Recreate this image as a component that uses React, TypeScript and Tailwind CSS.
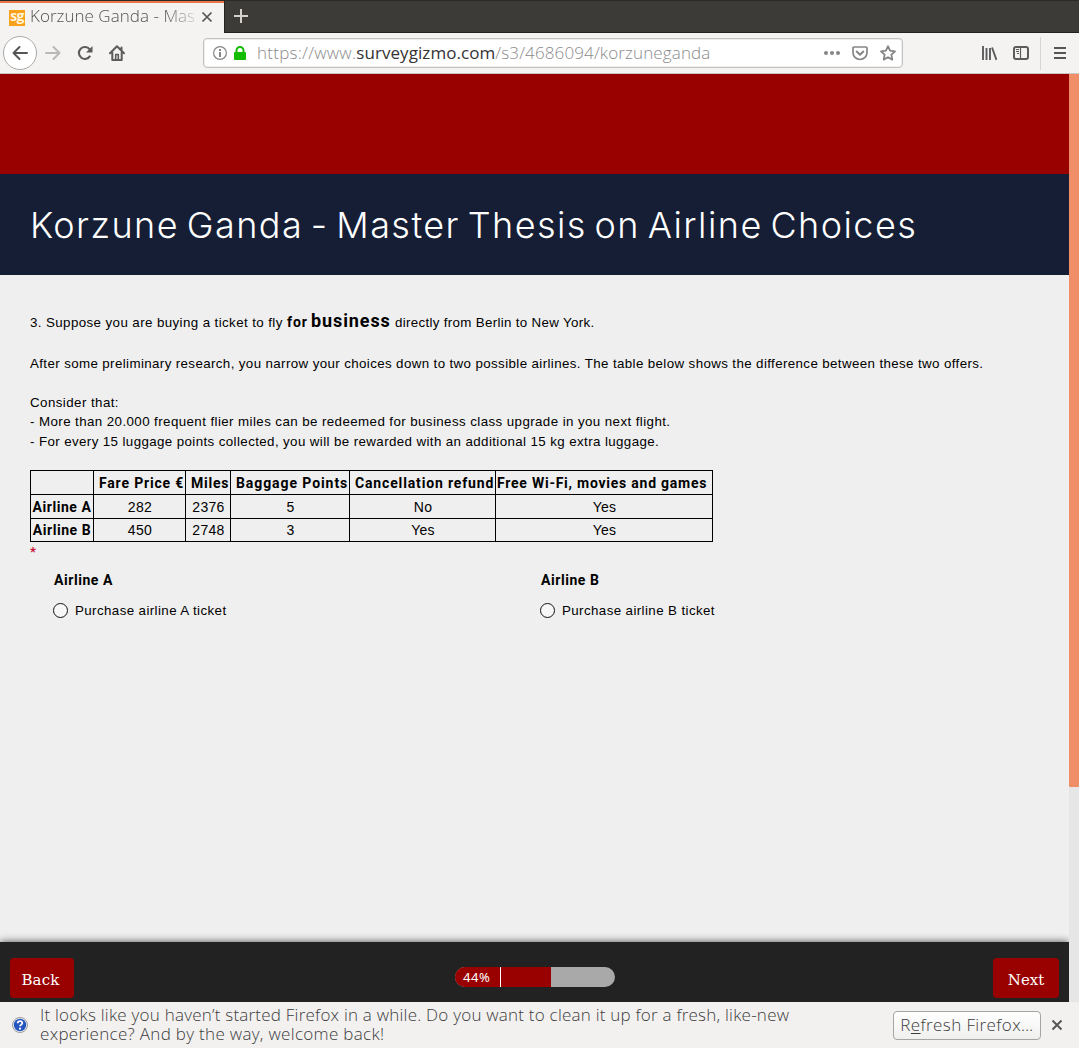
import type { ReactNode } from "react";

const columns = [
  { head: "", a: "Airline A", b: "Airline B", width: "w-[63px]", pad: "" },
  { head: "Fare Price €", a: "282", b: "450", width: "w-[92px]", pad: "pl-[5px] tracking-[0.830px]" },
  { head: "Miles", a: "2376", b: "2748", width: "w-[45px]", pad: "pl-[5px] tracking-[0.780px]" },
  { head: "Baggage Points", a: "5", b: "3", width: "w-[119px]", pad: "pl-[5px] tracking-[0.920px]" },
  { head: "Cancellation refund", a: "No", b: "Yes", width: "w-[146px]", pad: "pl-[5px] tracking-[0.850px]" },
  { head: "Free Wi-Fi, movies and games", a: "Yes", b: "Yes", width: "w-[217px]", pad: "pl-[1px] tracking-[0.760px]" },
];

function TabBar() {
  return (
    <div className="flex h-[33px] border-t border-[#2b2a27] bg-[#3c3b37]">
      <div className="flex h-8 w-[224px] items-center border-t-2 border-[#e9764b] bg-[#f4f3f2] pb-[2px] pl-[9px]">
        <div className="mt-px flex h-4 w-4 shrink-0 items-center justify-center bg-[#f9a11b] pb-[3px] font-['Open_Sans'] text-[14px] leading-4 font-bold tracking-[-0.8px] text-[#fff4dc]">
          sg
        </div>
        <div className="-mt-[2px] ml-[5px] w-[166px] overflow-hidden bg-gradient-to-r from-[#4c4c4c] from-80% to-[#d8d8d8] bg-clip-text text-[17px] leading-[26px] font-[350] tracking-[0.030px] whitespace-nowrap text-transparent">
          Korzune Ganda - Mas
        </div>
        <svg className="ml-[5px] h-3 w-3 shrink-0" viewBox="0 0 12 12" fill="none" stroke="#555" strokeWidth="1.7">
          <path d="M1.500 1.500l9 9M10.500 1.500l-9 9" />
        </svg>
      </div>
      <div className="flex flex-1 items-center border-b border-l border-[#23221f] pb-px pl-[9px]">
        <svg className="h-[14px] w-[14px]" viewBox="0 0 14 14" stroke="#d4d1cd" strokeWidth="2">
          <path d="M7 0v14M0 7h14" />
        </svg>
      </div>
    </div>
  );
}

function NavBar() {
  return (
    <div className="flex h-[41px] items-center border-b border-[#c9c7c5] bg-[#f4f3f2]">
      <div className="ml-[3px] flex h-[34px] w-[34px] shrink-0 items-center justify-center rounded-full border border-[#aaa] bg-white">
        <svg className="h-4 w-4" viewBox="0 0 16 16" fill="none" stroke="#555" strokeWidth="2" strokeLinecap="round" strokeLinejoin="round">
          <path d="M15 8H1.500M7.500 2L1.500 8l6 6" />
        </svg>
      </div>
      <svg className="ml-2 h-4 w-4 shrink-0" viewBox="0 0 16 16" fill="none" stroke="#b9b8b7" strokeWidth="2" strokeLinecap="round" strokeLinejoin="round">
        <path d="M1 8h13.500M8.500 2l6 6-6 6" />
      </svg>
      <svg className="ml-4 h-4 w-4 shrink-0" viewBox="0 0 16 16" fill="none" stroke="#5c5c5c" strokeWidth="2.100">
        <path d="M13.200 10.800A6 6 0 1 1 12.700 4.300" />
        <path d="M15.500 1v6.500H9z" fill="#5c5c5c" stroke="none" />
      </svg>
      <svg className="ml-4 h-4 w-4 shrink-0" viewBox="0 0 16 16" fill="none" stroke="#5c5c5c" strokeWidth="2" strokeLinejoin="round" strokeLinecap="round">
        <path d="M1 8.300L8 1.300l7 7M3.300 7.500V15h9.400V7.500M12.500 5V2.500" />
        <path d="M6.700 15V9.500h2.600V15" strokeWidth="1.600" />
      </svg>
      <div className="ml-[78px] flex h-[30px] w-[700px] shrink-0 items-center rounded-[4px] border border-[#c4c2c0] bg-white pr-[6px] pl-[9px] shadow-[inset_0_0_0_1px_#eeeeee]">
        <svg className="h-[14px] w-[14px] shrink-0" viewBox="0 0 14 14" fill="none" stroke="#858585">
          <circle cx="7" cy="7" r="6.400" strokeWidth="1.200" />
          <path d="M7 6v5M7 3v2" strokeWidth="2" />
        </svg>
        <svg className="ml-[7px] h-[14px] w-3 shrink-0" viewBox="0 0 12 14">
          <rect x="0" y="6" width="12" height="8" rx="1" fill="#12bc00" />
          <path d="M2.500 7V4.500a3.500 3.500 0 0 1 7 0V7" fill="none" stroke="#12bc00" strokeWidth="2" />
        </svg>
        <div className="ml-[11px] flex text-[17px] leading-[26px] font-light whitespace-nowrap text-[#8b8b8b]">
          <span className="tracking-[0.270px]">https://www.</span>
          <span className="font-normal tracking-[0.070px] text-[#333]">surveygizmo.com</span>
          <span className="tracking-[0.130px]">/s3/4686094/korzuneganda</span>
        </div>
        <svg className="ml-auto h-4 w-4 shrink-0" viewBox="0 0 16 16" fill="#858585">
          <circle cx="2" cy="8" r="2" />
          <circle cx="8" cy="8" r="2" />
          <circle cx="14" cy="8" r="2" />
        </svg>
        <svg className="ml-3 h-4 w-4 shrink-0" viewBox="0 0 16 16" fill="none" stroke="#858585" strokeWidth="2" strokeLinecap="round" strokeLinejoin="round">
          <path d="M2 2h12c.6 0 1 .4 1 1v4.500a7 7 0 0 1-14 0V3c0-.6.4-1 1-1z" strokeWidth="1.700" />
          <path d="M4.700 6.500L8 9.700l3.300-3.200" />
        </svg>
        <svg className="ml-3 h-4 w-4 shrink-0" viewBox="0 0 16 16" fill="none" stroke="#858585" strokeWidth="1.800" strokeLinejoin="round">
          <path d="M8 1.200l2.050 4.500 4.950.6-3.650 3.400.95 4.900L8 12.200l-4.300 2.400.95-4.900L1 6.300l4.950-.6z" />
        </svg>
      </div>
      <svg className="ml-[78px] h-4 w-4 shrink-0" viewBox="0 0 16 16" fill="none" stroke="#5c5c5c">
        <path d="M2 1v14M5.500 3v12M9 3v12M11 2.500l4.500 12.500" strokeWidth="1.900" />
      </svg>
      <svg className="ml-4 h-4 w-4 shrink-0" viewBox="0 0 16 16" fill="none" stroke="#5c5c5c">
        <rect x="1" y="2" width="14" height="12" rx="2" strokeWidth="2" />
        <path d="M7.500 2v12" strokeWidth="1.200" />
        <path d="M3 4.500h3M3 6.500h3M4 8.500h2" />
      </svg>
      <div className="ml-[11px] h-[33px] w-px bg-[#d6d5d3]" />
      <svg className="ml-[13px] h-4 w-3 shrink-0" viewBox="0 0 12 16" stroke="#555" strokeWidth="2">
        <path d="M0 3h12M0 8h12M0 13h12" />
      </svg>
    </div>
  );
}

function Choice({ title, label }: { title: string; label: string }) {
  return (
    <div className="w-[487px]">
      <div className="h-5 font-[Roboto] text-[14px] font-bold tracking-[0.550px]">{title}</div>
      <label className="mt-[10px] flex h-5 items-center">
        <span className="-ml-px h-[15px] w-[15px] rounded-full border-[1.500px] border-[#111] bg-[#f7f7f7]" />
        <span className="ml-[7px] pt-[2px] tracking-[0.400px]">{label}</span>
      </label>
    </div>
  );
}

function Cell({ children, className }: { children: ReactNode; className: string }) {
  return (
    <div className={`flex shrink-0 items-center overflow-hidden border-r border-black whitespace-nowrap ${className}`}>
      {children}
    </div>
  );
}

function OffersTable() {
  return (
    <div className="mt-[18px] w-[683px] border-t border-l border-black">
      <div className="flex h-6 border-b border-black font-[Roboto] text-[14px] font-bold">
        {columns.map((c) => (
          <Cell key={c.head} className={`${c.width} ${c.pad}`}>{c.head}</Cell>
        ))}
      </div>
      <div className="flex h-6 border-b border-black">
        {columns.map((c, i) => (
          <Cell key={c.head} className={`${c.width} justify-center ${i === 0 ? "font-[Roboto] text-[14px] font-bold tracking-[0.550px]" : "pl-px text-[14px] tracking-[0.300px]"}`}>{c.a}</Cell>
        ))}
      </div>
      <div className="flex h-[23px] border-b border-black">
        {columns.map((c, i) => (
          <Cell key={c.head} className={`${c.width} justify-center ${i === 0 ? "font-[Roboto] text-[14px] font-bold tracking-[0.550px]" : "pl-px text-[14px] tracking-[0.300px]"}`}>{c.b}</Cell>
        ))}
      </div>
    </div>
  );
}

function Survey() {
  return (
    <div className="flex h-[928px] w-[1069px] flex-col bg-[#efefef]">
      <div className="h-[100px] bg-[#990000]" />
      <div className="flex h-[101px] items-center bg-[#151e35] pt-px pl-[30px] font-[Inter] text-[36px] font-light tracking-[1.450px] whitespace-nowrap text-white [word-spacing:-3.9px]">
        Korzune Ganda - Master Thesis on Airline Choices
      </div>
      <main className="flex-1 pt-[36px] pl-[30px] font-['Liberation_Sans'] text-[13.330px] leading-5 whitespace-nowrap text-black">
        <div className="flex h-5 items-baseline">
          <span className="w-[257px] tracking-[0.400px]">3. Suppose you are buying a ticket to fly</span>
          <b className="w-6 font-[Roboto] text-[14px] tracking-[0.900px]">for</b>
          <b className="w-[84px] font-[Roboto] text-[18px] tracking-[0.900px]">business</b>
          <span className="tracking-[0.320px]">directly from Berlin to New York.</span>
        </div>
        <div className="mt-[23px] tracking-[0.380px]">
          After some preliminary research, you narrow your choices down to two possible airlines. The table below shows the difference between these two offers.
        </div>
        <div className="mt-[19px] tracking-[0.430px]">Consider that:</div>
        <div className="-mt-px tracking-[0.410px]">
          - More than 20.000 frequent flier miles can be redeemed for business class upgrade in you next flight.
        </div>
        <div className="tracking-[0.390px]">
          - For every 15 luggage points collected, you will be rewarded with an additional 15 kg extra luggage.
        </div>
        <OffersTable />
        <div className="h-[18px] font-[Roboto] text-[13px] font-bold text-[#cc1133]">*</div>
        <div className="mt-[10px] ml-6 flex">
          <Choice title="Airline A" label="Purchase airline A ticket" />
          <Choice title="Airline B" label="Purchase airline B ticket" />
        </div>
      </main>
      <footer className="flex h-[60px] items-start justify-between bg-[#222] px-[10px] pt-4 text-white shadow-[0_0_8px_rgba(0,0,0,0.7)] [clip-path:inset(-12px_0_0_0)]">
        <button className="h-10 w-16 rounded-[4px] bg-[#990000] pt-[5px] pr-[3px] font-['DejaVu_Serif'] text-[15px] font-extralight tracking-[0.180px]">Back</button>
        <div className="mt-[9px] -mr-[3px] flex h-5 w-[160px] overflow-hidden rounded-full bg-[#a9a9a9]">
          <div className="flex h-5 w-[96px] bg-[#990000]">
            <div className="h-5 w-[46px] border-r border-white pl-2 font-['Noto_Sans'] text-[13px] leading-5 tracking-[0.600px]">44%</div>
          </div>
        </div>
        <button className="h-10 w-[66px] rounded-[4px] bg-[#990000] pt-[5px] font-['DejaVu_Serif'] text-[15px] font-extralight">Next</button>
      </footer>
    </div>
  );
}

function Notification() {
  return (
    <div className="flex h-[46px] items-center bg-[#f2f1f0] text-[17px] font-[350] whitespace-nowrap text-[#3c3c3c]">
      <svg className="ml-3 h-4 w-4 shrink-0" viewBox="0 0 16 16">
        <circle cx="8" cy="8" r="7.500" fill="#eef1f6" stroke="#9a9a9a" />
        <circle cx="8" cy="8" r="6.200" fill="#2456bd" />
        <path d="M5.700 6.300c0-3 4.800-2.800 4.600-.2-.1 1.500-2.100 1.600-2.200 3.200" fill="none" stroke="white" strokeWidth="1.800" />
        <circle cx="8" cy="11.700" r="1.100" fill="white" />
      </svg>
      <div className="ml-3 w-[853px] pb-[2px] leading-[19px]">
        <div className="tracking-[0.224px]">It looks like you haven’t started Firefox in a while. Do you want to clean it up for a fresh, like-new</div>
        <div className="tracking-[0.310px]">experience? And by the way, welcome back!</div>
      </div>
      <button className="flex h-[29px] w-[148px] items-center justify-center rounded-[4px] border border-[#a5a5a3] bg-gradient-to-b from-white to-[#f0f0ef] tracking-[0.400px]">
        <span>R<span className="underline underline-offset-2">e</span>fresh Firefox…</span>
      </button>
      <svg className="ml-[10px] h-3 w-3 shrink-0" viewBox="0 0 12 12" fill="none" stroke="#555" strokeWidth="1.900">
        <path d="M1.500 1.500l9 9M10.500 1.500l-9 9" />
      </svg>
    </div>
  );
}

export default function App() {
  return (
    <div className="h-[1048px] w-[1079px] overflow-hidden font-['Open_Sans']">
      <TabBar />
      <NavBar />
      <div className="flex h-[928px]">
        <Survey />
        <div className="w-[10px] bg-[#e6e6e6]">
          <div className="h-[713px] rounded-b-[1px] bg-[#f08f67]" />
        </div>
      </div>
      <Notification />
    </div>
  );
}
